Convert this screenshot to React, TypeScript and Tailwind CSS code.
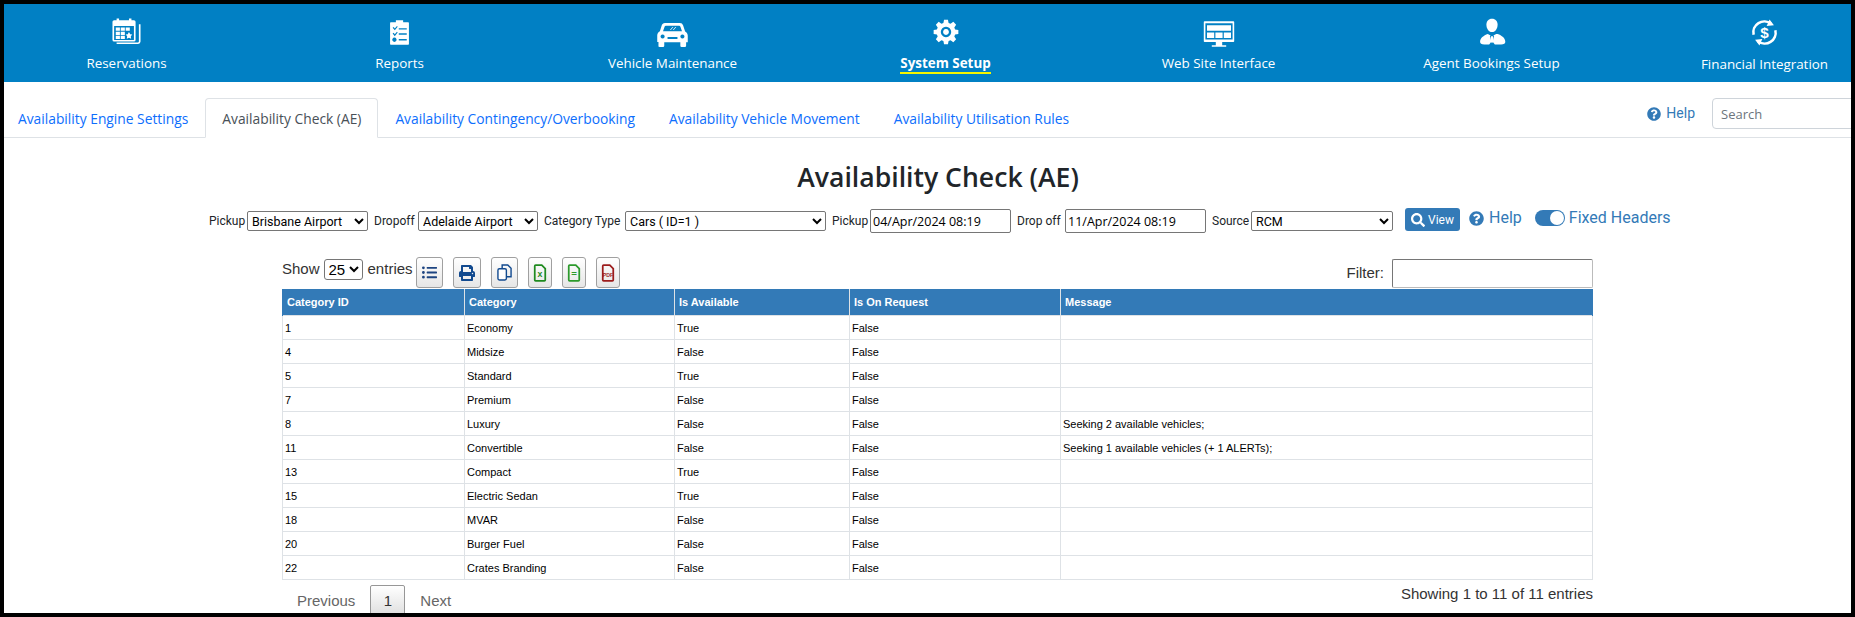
import React from 'react';
import { FaListUl, FaPrint, FaQuestionCircle, FaSearch } from 'react-icons/fa';

const NAV_ITEMS = [
    { label: 'Reservations', icon: 'calendar' },
    { label: 'Reports', icon: 'clipboard' },
    { label: 'Vehicle Maintenance', icon: 'car' },
    { label: 'System Setup', icon: 'gear', active: true },
    { label: 'Web Site Interface', icon: 'monitor' },
    { label: 'Agent Bookings Setup', icon: 'agent' },
    { label: 'Financial Integration', icon: 'money' },
];

const TABS = [
    'Availability Engine Settings',
    'Availability Check (AE)',
    'Availability Contingency/Overbooking',
    'Availability Vehicle Movement',
    'Availability Utilisation Rules',
];

const ROWS = [
    ['1', 'Economy', 'True', 'False', ''],
    ['4', 'Midsize', 'False', 'False', ''],
    ['5', 'Standard', 'True', 'False', ''],
    ['7', 'Premium', 'False', 'False', ''],
    ['8', 'Luxury', 'False', 'False', 'Seeking 2 available vehicles;'],
    ['11', 'Convertible', 'False', 'False', 'Seeking 1 available vehicles (+ 1 ALERTs);'],
    ['13', 'Compact', 'True', 'False', ''],
    ['15', 'Electric Sedan', 'True', 'False', ''],
    ['18', 'MVAR', 'False', 'False', ''],
    ['20', 'Burger Fuel', 'False', 'False', ''],
    ['22', 'Crates Branding', 'False', 'False', ''],
];

const HEADERS = ['Category ID', 'Category', 'Is Available', 'Is On Request', 'Message'];

// Menu icons are all drawn on a 40x40 box
const NavIcon: React.FC<{ name: string }> = ({ name }) => {
    if (name === 'calendar') {
        return (
            <svg viewBox="0 0 40 40" className="h-[33px] w-[33px]" fill="white">
                <path d="M8 34h26a3 3 0 0 0 3-3V10h-2v21a1 1 0 0 1-1 1H8z" />
                <path fillRule="evenodd" d="M5 5h3V3h3v2h12V3h3v2h3a2 2 0 0 1 2 2v22a2 2 0 0 1-2 2H5a2 2 0 0 1-2-2V7a2 2 0 0 1 2-2zm0 7v17h24V12z" />
                <path d="M7 14h5v4H7zM13 14h5v4h-5zM19 14h5v4h-5zM7 19h5v4H7zM13 19h5v4h-5zM7 24h5v4H7zM13 24h5v4h-5z" />
                <path d="M23 19.500l1.500 2.500 2.500.500-1.800 2 .4 3-2.600-1.200-2.600 1.200.4-3-1.800-2 2.500-.500z" />
            </svg>
        );
    }
    if (name === 'clipboard') {
        return (
            <svg viewBox="0 0 40 40" className="h-[29px] w-[29px]" fill="white">
                <path fillRule="evenodd" d="M8 6h7V3h10v3h7a1 1 0 0 1 1 1v29a1 1 0 0 1-1 1H8a1 1 0 0 1-1-1V7a1 1 0 0 1 1-1zM10.500 13.500l1.500-1 1.500 2 3-3.500 1 1-4 5zM10.500 21.500l1.500-1 1.500 2 3-3.500 1 1-4 5zM19 14h11v2H19zM19 21h11v2H19zM19 29h11v2H19zM13 27a3 3 0 1 0 .01 0z" />
            </svg>
        );
    }
    if (name === 'car') {
        return (
            <svg viewBox="0 0 40 40" className="mt-[5px] h-[33px] w-[33px]" fill="white">
                <path fillRule="evenodd" d="M11 6h18a4 4 0 0 1 3.800 2.800l2.500 7.700c2 1 3.200 3 3.200 5v8h-2v4a1.500 1.500 0 0 1-1.500 1.500h-4a1.500 1.500 0 0 1-1.500-1.500v-4H10v4a1.500 1.500 0 0 1-1.500 1.500h-4A1.500 1.500 0 0 1 3 33v-4H1.500v-8c0-2 1.200-4 3.200-5l2.500-7.700A4 4 0 0 1 11 6zm1 3.500c-.8 0-1.400.5-1.600 1.200L8.500 16h23l-1.900-5.300c-.2-.7-.8-1.200-1.600-1.200zM8 20a2.500 2.500 0 1 0 .01 0zM32 20a2.500 2.500 0 1 0 .01 0zM14 23h12v2.500H14z" />
                <path d="M17 14.500l3-3.500h1l-3 3.500zM20.500 14.500l3-3.500h1l-3 3.500z" />
            </svg>
        );
    }
    if (name === 'gear') {
        return (
            <svg viewBox="0 0 40 40" className="h-[26px] w-[26px]" fill="white">
                <path fillRule="evenodd" d="M17 1h6l1 5 3 1.200 4.300-2.800 4.300 4.300L32.800 13l1.200 3 5 1v6l-5 1-1.200 3 2.800 4.300-4.300 4.300L27 32.800 24 34l-1 5h-6l-1-5-3-1.200-4.300 2.800-4.300-4.300L7.200 27 6 24l-5-1v-6l5-1 1.200-3-2.800-4.300 4.300-4.300L13 7.200 16 6zM20 12a8 8 0 1 0 .01 0zM20 15.500a4.500 4.500 0 1 1-.01 0z" />
            </svg>
        );
    }
    if (name === 'monitor') {
        return (
            <svg viewBox="0 0 40 40" className="mt-[4px] h-[32px] w-[32px]" fill="white">
                <path fillRule="evenodd" d="M2 4h36a1 1 0 0 1 1 1v24a1 1 0 0 1-1 1H24v4h5v2H11v-2h5v-4H2a1 1 0 0 1-1-1V5a1 1 0 0 1 1-1zm1 2.500V27h34V6.500zM5 9h30v7H5zM5 18h9v7H5zM15.500 18h9v7h-9zM26 18h9v7h-9z" />
            </svg>
        );
    }
    if (name === 'agent') {
        return (
            <svg viewBox="0 0 40 40" className="h-[28px] w-[28px]" fill="white">
                <path d="M20 1c5 0 8 3.500 8 8.500S25 20 20 20s-8-5.500-8-10.500S15 1 20 1z" />
                <path d="M14 23l4 2-1 1 2 8-3 4H9c-4 0-6-1.500-6-4 0-5 5-9 11-11zM26 23l-4 2 1 1-2 8 3 4h9c4 0 6-1.500 6-4 0-5-5-9-11-11z" />
                <path d="M18.500 26h3l1 7-2.500 3-2.500-3z" />
            </svg>
        );
    }
    return (
        <svg viewBox="0 0 40 40" className="h-[29px] w-[29px]" fill="none" stroke="white" strokeWidth="3.500">
            <path d="M5 23a15 15 0 0 1 24-15M35 17a15 15 0 0 1-24 15" />
            <path d="M27 2l6 8-10 1zM13 38l-6-8 10-1z" fill="white" stroke="none" />
            <text x="20" y="27" textAnchor="middle" fontSize="21" fontWeight="700" fill="white" stroke="none" fontFamily="Liberation Sans, sans-serif">$</text>
        </svg>
    );
};

const NavBar: React.FC = () => (
    <nav className="-ml-[14px] grid h-[78px] w-[1911px] shrink-0 grid-cols-7 bg-[#0180c4]">
        {NAV_ITEMS.map((item) => (
            <a key={item.label} className="flex flex-col items-center pt-[10px] text-white">
                <div className="flex h-[36px] items-center justify-center">
                    <NavIcon name={item.icon} />
                </div>
                <span
                    className={
                        item.active
                            ? 'mt-[4px] border-b-2 border-[#f5f500] text-[13.400px] font-bold leading-[18px]'
                            : item.icon === 'money'
                                ? 'mt-[5px] text-[13.400px] leading-[19px]'
                                : 'mt-[4px] text-[13.400px] leading-[19px]'
                    }
                >
                    {item.label}
                </span>
            </a>
        ))}
    </nav>
);

const TabBar: React.FC = () => (
    <div className="flex h-[56px] w-[1868px] shrink-0 items-end border-b border-[#dee2e6]">
        <ul className="-mb-px -ml-[3px] flex">
            {TABS.map((tab, i) => (
                <li
                    key={tab}
                    className={
                        i === 1
                            ? 'h-[40px] rounded-t-[4px] border border-[#dee2e6] border-b-white bg-white px-4 text-[13.800px] leading-[39px] text-[#495057]'
                            : 'h-[40px] border border-transparent px-4 text-[13.800px] leading-[39px] text-[#0d6efd]'
                    }
                >
                    {tab}
                </li>
            ))}
        </ul>
        <div className="ml-auto mb-[8px] flex items-center">
            <FaQuestionCircle className="h-[14px] w-[14px] text-[#337ab7]" />
            <span className="ml-[5px] font-['Roboto',sans-serif] text-[14px] text-[#337ab7]">Help</span>
            <input
                placeholder="Search"
                className="ml-[17px] h-[31px] w-[160px] rounded-[4px] border border-[#ced4da] px-2 text-[13px] placeholder:text-[#6c757d]"
            />
        </div>
    </div>
);

const selectClass = 'h-[20px] rounded-[2px] border border-[#767676] bg-white text-[12.500px] leading-[18px] text-black';
const dateClass = 'h-[24px] w-[141px] rounded-[2px] border border-[#767676] px-[2px] font-[\'Open_Sans\',sans-serif] text-[12.500px] text-black';

const FilterBar: React.FC = () => (
    <div className="mt-[14px] flex h-[26px] shrink-0 items-center whitespace-nowrap pl-[205px] font-['Roboto',sans-serif] text-[12px] text-[#212529]">
        <label className="w-[38px]">Pickup</label>
        <select className={`${selectClass} w-[121px]`} defaultValue="b"><option value="b">Brisbane Airport</option></select>
        <label className="ml-[6px] w-[44px]">Dropoff</label>
        <select className={`${selectClass} w-[120px]`} defaultValue="a"><option value="a">Adelaide Airport</option></select>
        <label className="ml-[6px] w-[81px]">Category Type</label>
        <select className={`${selectClass} w-[201px]`} defaultValue="c"><option value="c">Cars ( ID=1 )</option></select>
        <label className="ml-[6px] w-[38px]">Pickup</label>
        <input className={dateClass} defaultValue="04/Apr/2024 08:19" />
        <label className="ml-[6px] w-[48px]">Drop off</label>
        <input className={dateClass} defaultValue="11/Apr/2024 08:19" />
        <label className="ml-[6px] w-[39px]">Source</label>
        <select className={`${selectClass} w-[142px]`} defaultValue="r"><option value="r">RCM</option></select>
        <button className="ml-[12px] -mt-[3px] flex h-[23px] w-[55px] items-center justify-center gap-[3px] rounded-[3px] bg-[#337ab7] text-[12px] text-white">
            <FaSearch className="h-[14px] w-[14px]" />
            View
        </button>
        <div className="-mt-[6px] ml-[9px] flex items-center text-[16px] text-[#337ab7]">
            <FaQuestionCircle className="h-[15px] w-[15px]" />
            <span className="ml-[5px]">Help</span>
            <span className="ml-[13px] flex h-[16px] w-[30px] items-center justify-end rounded-full bg-[#337ab7] pr-[1px]">
                <span className="h-[14px] w-[14px] rounded-full bg-white" />
            </span>
            <span className="ml-[4px]">Fixed Headers</span>
        </div>
    </div>
);

const CopyIcon: React.FC = () => (
    <svg viewBox="0 0 16 18" className="h-[17px] w-[15px]" fill="none" stroke="#124a8f" strokeWidth="1.500">
        <path d="M5.500 13.500V1h6l3.500 3.500v9z" />
        <rect x="1" y="5" width="9" height="12" rx="1.500" fill="white" />
    </svg>
);

const FileIcon: React.FC<{ color: string; mark: string; markSize: number }> = ({ color, mark, markSize }) => (
    <svg viewBox="0 0 16 20" className="h-[18px] w-[14px]" fill="none" stroke={color} strokeWidth="2">
        <path d="M3 1h7l4 4v13a1 1 0 0 1-1 1H3a1 1 0 0 1-1-1V2a1 1 0 0 1 1-1z" />
        <text x="8" y="15" textAnchor="middle" fontSize={markSize} fontWeight="700" fill={color} stroke="none" fontFamily="Liberation Sans, sans-serif">{mark}</text>
    </svg>
);

const ExportButton: React.FC<{ width: string; children: React.ReactNode }> = ({ width, children }) => (
    <button className={`flex h-[31px] items-center justify-center rounded-[3px] border border-[#a0a0a0] bg-gradient-to-b from-white to-[#e6e6e6] ${width}`}>
        {children}
    </button>
);

const TableToolbar: React.FC = () => (
    <div className="mt-[23px] flex h-[32px] items-start text-[15px] text-[#333]">
        <div className="flex h-[25px] items-center">
            <span>Show</span>
            <select className="ml-[4px] h-[21px] w-[39px] rounded-[3px] border border-[#767676] bg-white text-[15px] text-black" defaultValue="25"><option>25</option></select>
            <span className="ml-[5px]">entries</span>
        </div>
        <div className="ml-[3px] flex gap-[10px]">
            <ExportButton width="w-[27px]"><FaListUl className="h-[15px] w-[15px] text-[#1d4481]" /></ExportButton>
            <ExportButton width="w-[28px]"><FaPrint className="h-[16px] w-[16px] text-[#124a8f]" /></ExportButton>
            <ExportButton width="w-[27px]"><CopyIcon /></ExportButton>
            <ExportButton width="w-[24px]"><FileIcon color="#1f8a1f" mark="x" markSize={10} /></ExportButton>
            <ExportButton width="w-[24px]"><FileIcon color="#2c9a2c" mark="=" markSize={11} /></ExportButton>
            <ExportButton width="w-[24px]"><FileIcon color="#9c1c1c" mark="PDF" markSize={6} /></ExportButton>
        </div>
        <div className="ml-auto mt-[2px] flex items-start">
            <span className="mt-[3px]">Filter:</span>
            <input className="ml-[8px] h-[29px] w-[201px] rounded-[2px] border border-[#767676] border-b-[#bbb] border-r-[#bbb]" />
        </div>
    </div>
);

const DataTable: React.FC = () => (
    <table className="w-[1311px] table-fixed border-collapse text-[11px] text-black">
        <colgroup>
            <col className="w-[182px]" />
            <col className="w-[210px]" />
            <col className="w-[175px]" />
            <col className="w-[211px]" />
            <col />
        </colgroup>
        <thead>
            <tr className="h-[26px] bg-[#337ab7] text-left font-bold text-white">
                {HEADERS.map((h) => (
                    <th key={h} className="border-x border-[#dee2e6] px-[4px] first:border-l-[#337ab7] last:border-r-[#337ab7]">{h}</th>
                ))}
            </tr>
        </thead>
        <tbody>
            {ROWS.map((row) => (
                <tr key={row[0]} className="h-[24px]">
                    {row.map((cell, i) => (
                        <td key={i} className="border border-[#dee2e6] px-[2px] pt-[3px]">{cell}</td>
                    ))}
                </tr>
            ))}
        </tbody>
    </table>
);

const Pagination: React.FC = () => (
    <div className="flex items-start text-[15px]">
        <div className="flex pl-[15px] pt-[5px]">
            <span className="mt-[5px] text-[#666]">Previous</span>
            <span className="ml-[15px] h-[34px] w-[35px] rounded-[2px] border border-[#979797] bg-gradient-to-b from-white to-[#dcdcdc] pt-[4px] text-center text-[#333]">1</span>
            <span className="ml-[15px] mt-[5px] text-[#666]">Next</span>
        </div>
        <span className="ml-auto mt-[3px] text-[#333]">Showing 1 to 11 of 11 entries</span>
    </div>
);

export default function App() {
    return (
        <div className="h-[617px] w-[1855px] overflow-hidden bg-black p-1">
            <div className="flex h-full w-full flex-col overflow-hidden bg-white font-['Open_Sans',sans-serif]">
                <NavBar />
                <TabBar />
                <h1 className="mt-[22px] w-[1868px] shrink-0 text-center text-[26.600px] font-semibold leading-[34px] text-[#212529]">
                    Availability Check (AE)
                </h1>
                <FilterBar />
                <section className="ml-[278px] w-[1311px] shrink-0 font-['Liberation_Sans',Arial,sans-serif]">
                    <TableToolbar />
                    <DataTable />
                    <Pagination />
                </section>
            </div>
        </div>
    );
}
